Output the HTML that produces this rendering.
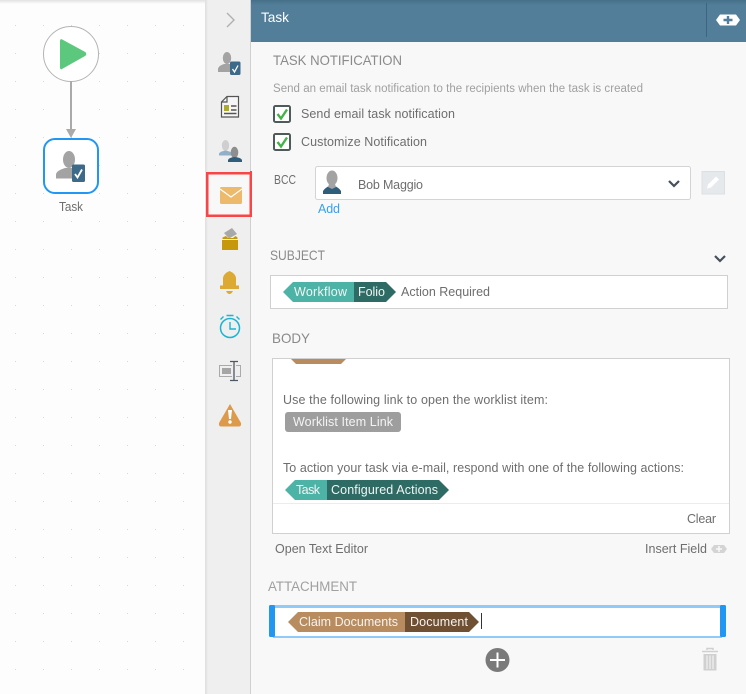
<!DOCTYPE html>
<html><head><meta charset="utf-8"><style>
html,body{margin:0;padding:0;width:746px;height:694px;overflow:hidden;background:#fdfdfd}
svg{display:block}
text{font-family:"Liberation Sans",sans-serif;font-size:12.5px;fill:#6e6e6e}
.h{font-size:14px;fill:#8a8a8a}
.w{fill:#f4f4f4;font-size:12.5px}
</style></head><body>
<svg width="746" height="694" viewBox="0 0 746 694" xmlns="http://www.w3.org/2000/svg">
<defs>
<pattern id="dots" x="15" y="25" width="28" height="28" patternUnits="userSpaceOnUse"><rect width="1" height="1" fill="#d8d8d8"/></pattern>
<linearGradient id="hd" x1="0" y1="0" x2="0" y2="1"><stop offset="0" stop-color="#46708a"/><stop offset=".12" stop-color="#527e99"/><stop offset="1" stop-color="#527e99"/></linearGradient>
<linearGradient id="tp" x1="0" y1="0" x2="0" y2="1"><stop offset="0" stop-color="#e2e2e2"/><stop offset="1" stop-color="#fdfdfd"/></linearGradient>
<linearGradient id="sh" x1="0" y1="0" x2="1" y2="0"><stop offset="0" stop-color="#dedede"/><stop offset="1" stop-color="#efefef"/></linearGradient>
</defs>

<!-- canvas -->
<rect width="206" height="694" fill="#fdfdfd"/>
<rect width="206" height="694" fill="url(#dots)"/>
<rect width="206" height="4" fill="url(#tp)"/>
<circle cx="71" cy="54" r="27.5" fill="#fff" stroke="#b4b4b4" stroke-width="1"/>
<path d="M62 40 L85 52.500 Q86.500 54 85 55.500 L62 68.500 Q60.500 69.500 60.500 67.500 V41 Q60.500 39 62 40Z" fill="#5cc87e" stroke="#5cc87e" stroke-linejoin="round"/>
<rect x="70" y="81" width="2" height="49" fill="#aaa"/>
<path d="M66 129H76L71 138Z" fill="#aaa"/>
<rect x="44" y="139" width="54" height="54" rx="11" fill="#fff" stroke="#2196f3" stroke-width="2"/>
<ellipse cx="69" cy="159.500" rx="6" ry="8.500" fill="#a3a3a3"/>
<path d="M56 178.500 V174 Q57 170.500 65 168 H73 V178.500Z" fill="#a3a3a3"/>
<rect x="72" y="164.500" width="13" height="17.500" rx="1.500" fill="#3e6a8a"/>
<path d="M75 174 L77.500 177.500 L82 169.500" fill="none" stroke="#fff" stroke-width="1.800"/>
<text x="59" y="211" textLength="24" lengthAdjust="spacingAndGlyphs">Task</text>

<!-- side strip -->
<rect x="206" width="45" height="694" fill="#efefef"/>
<rect x="205" width="3" height="694" fill="url(#sh)"/>
<rect x="250" width="1" height="694" fill="#cfcfcf"/>
<path d="M227 13 L234 20 L227 27" fill="none" stroke="#b0b0b0" stroke-width="1.400"/>
<!-- task user -->
<ellipse cx="227" cy="58" rx="4.200" ry="6" fill="#a3a3a3"/>
<path d="M218 72 V68.500 Q219 65.500 224 64 H231 V72Z" fill="#a3a3a3"/>
<rect x="230" y="61.500" width="10.500" height="13.500" rx="1.500" fill="#3e6a8a"/>
<path d="M232.500 69 L234.500 72 L238 65.500" fill="none" stroke="#fff" stroke-width="1.300"/>
<!-- doc -->
<path d="M227 96.500 H238.500 V117 H221.500 V102Z M227 96.500 V102 H221.500" fill="#f6f6f6" stroke="#555" stroke-width="1.200"/>
<rect x="224" y="105" width="5" height="6" fill="#aeaa2a"/>
<path d="M231 106H236.500M231 110H236.500M224 113.500H236.500" stroke="#555" stroke-width="1.400"/>
<!-- two people -->
<ellipse cx="225.500" cy="145.500" rx="3.700" ry="5.500" fill="#cfcfcf"/>
<path d="M219 155.500 V153.500 Q220 151.500 225.500 150.500 Q231 151.500 232 153.500 V155.500Z" fill="#8fb0c6"/>
<ellipse cx="234.500" cy="152.500" rx="3.800" ry="5.700" fill="#8e8e8e"/>
<path d="M228 162 V160 Q229 157.500 234.500 157 Q241 157.500 242 160 V162Z" fill="#2f5d7c"/>
<!-- highlighted -->
<rect x="207.250" y="173.250" width="43.500" height="42.500" fill="#f8f8f8" stroke="#f94545" stroke-width="2.500"/>
<rect x="220" y="187" width="22" height="17" rx="1.500" fill="#edb96a"/>
<path d="M220 189 L231 197 L242 189" fill="none" stroke="#fff" stroke-width="1.200"/>
<!-- box -->
<path d="M224 233 L232 228 L237 234 L229 238.500Z" fill="#a8a8a8"/>
<path d="M222.500 239 V237.500 L226 236 L228 238 H233 L235.500 236 L237.500 237.500 V239Z" fill="#c6980b"/>
<rect x="222" y="240" width="16" height="10" fill="#c6980b"/>
<!-- bell -->
<path d="M223 285.500 V278 Q223.500 273.500 229.500 271 Q235.500 273.500 236 278 V285.500Z" fill="#dcaa33"/>
<rect x="220" y="285.500" width="19" height="3.500" fill="#dcaa33"/>
<path d="M226 291 H233 Q231.500 294 229.500 294 Q227.500 294 226 291Z" fill="#dcaa33"/>
<!-- stopwatch -->
<circle cx="230" cy="328" r="9.500" fill="none" stroke="#1ab5d0" stroke-width="1.500"/>
<path d="M226.500 315.500H233.500M220.500 319.500L223.500 316.500M239.500 319.500L236.500 316.500M230 322V329H236" fill="none" stroke="#1ab5d0" stroke-width="1.400"/>
<!-- text field -->
<path d="M232 365.500H219.500V376.500H232M236 365.500H240.500V376.500H236" fill="none" stroke="#aaa"/>
<rect x="222" y="368" width="9" height="6" fill="#a5a5a5"/>
<path d="M234 361.500V380.500M230 361.500H238M230 380.500H238" stroke="#4d5a63" stroke-width="1.300"/>
<!-- warning -->
<path d="M230 404 L241 423 Q241.500 426.500 239 426.500 H221 Q218.500 426.500 219 423Z" fill="#dd9a4a"/>
<path d="M228 410 H232 L231 419 H229Z" fill="#fff"/>
<circle cx="230" cy="422" r="1.700" fill="#fff"/>

<!-- panel -->
<rect x="251" width="495" height="694" fill="#f8f8f8"/>
<rect x="250" y="171" width="2" height="46" fill="#f94545"/>
<rect x="251" width="495" height="42" fill="url(#hd)"/>
<rect x="706" y="3" width="1" height="34" fill="#3c6680"/>
<text x="261" y="22" textLength="28" lengthAdjust="spacingAndGlyphs" style="fill:#fff;font-size:14px">Task</text>
<path d="M716 20 L720 14.500 H736 L740 20 L736 25.500 H720Z" fill="#fff"/>
<path d="M723.500 20H732.500M728 16V24" stroke="#527e99" stroke-width="2.400"/>

<text class="h" x="273" y="65" textLength="129" lengthAdjust="spacingAndGlyphs">TASK NOTIFICATION</text>
<text x="273" y="92" textLength="370" lengthAdjust="spacing" style="font-size:11.500px;fill:#a0a0a0">Send an email task notification to the recipients when the task is created</text>

<rect x="274" y="106" width="16" height="16" rx="1.500" fill="#fff" stroke="#4f5b5b" stroke-width="2"/>
<path d="M277.500 114 L281 118.500 L287 109.500" fill="none" stroke="#46b04a" stroke-width="2.400"/>
<text x="301" y="118" textLength="154" lengthAdjust="spacing">Send email task notification</text>
<rect x="274" y="134" width="16" height="16" rx="1.500" fill="#fff" stroke="#4f5b5b" stroke-width="2"/>
<path d="M277.500 142 L281 146.500 L287 137.500" fill="none" stroke="#46b04a" stroke-width="2.400"/>
<text x="301" y="146" textLength="126" lengthAdjust="spacing">Customize Notification</text>

<text x="274" y="184" textLength="22" lengthAdjust="spacingAndGlyphs" style="font-size:12.500px">BCC</text>
<rect x="315.500" y="166.500" width="375" height="33" rx="2" fill="#fff" stroke="#d4d4d4"/>
<ellipse cx="332" cy="178" rx="5.500" ry="7.500" fill="#a3a3a3"/>
<path d="M323 194 V191 Q325 188 329 186 H335 Q339 188 341 191 V194Z" fill="#2f5d7c"/>
<path d="M329 184 H335 L336 187 L332 189 L328 187Z" fill="#a3a3a3"/>
<text x="358" y="189" textLength="65" lengthAdjust="spacing">Bob Maggio</text>
<path d="M669 181 L674 186 L679 181" fill="none" stroke="#46505c" stroke-width="2.200"/>
<rect x="702" y="171.500" width="22.500" height="22.500" fill="#e6e9eb" stroke="#dde0e2"/>
<path d="M707 188.500 L708 184.500 L716 176.500 L719 179.500 L711 187.500Z" fill="#fff"/>
<text x="318" y="213" textLength="22" lengthAdjust="spacing" style="fill:#3a9ff0">Add</text>

<text class="h" x="270" y="260" textLength="55" lengthAdjust="spacingAndGlyphs" style="font-size:14px">SUBJECT</text>
<path d="M715 256 L720 261 L725 256" fill="none" stroke="#46505c" stroke-width="2.200"/>
<rect x="270.500" y="275.500" width="457" height="33" fill="#fff" stroke="#d0d0d0"/>
<path d="M283 292 L293 282 H354 V302 H293Z" fill="#4db3a6"/>
<path d="M354 282 H386 L396 292 L386 302 H354Z" fill="#2e6b64"/>
<text class="w" x="294" y="296" textLength="53" lengthAdjust="spacing">Workflow</text>
<text class="w" x="358" y="296" textLength="27" lengthAdjust="spacing">Folio</text>
<text x="401" y="296" textLength="89" lengthAdjust="spacing">Action Required</text>

<text class="h" x="272" y="343" textLength="38" lengthAdjust="spacingAndGlyphs" style="font-size:14px">BODY</text>
<rect x="272.500" y="358.500" width="457" height="175" fill="#fff" stroke="#d0d0d0"/>
<path d="M291 359 H346 L341 364 H296Z" fill="#b88c5e"/>
<text x="283" y="404" textLength="265" lengthAdjust="spacing">Use the following link to open the worklist item:</text>
<rect x="285" y="412" width="116" height="20" rx="3" fill="#9e9e9e"/>
<text class="w" x="293" y="426" textLength="100" lengthAdjust="spacing">Worklist Item Link</text>
<text x="283" y="472" textLength="401" lengthAdjust="spacing">To action your task via e-mail, respond with one of the following actions:</text>
<path d="M285 490 L295 480 H327 V500 H295Z" fill="#4db3a6"/>
<path d="M327 480 H439 L449 490 L439 500 H327Z" fill="#2e6b64"/>
<text class="w" x="296" y="494" textLength="24" lengthAdjust="spacing">Task</text>
<text class="w" x="331" y="494" textLength="107" lengthAdjust="spacing">Configured Actions</text>
<rect x="273" y="503" width="456" height="1" fill="#ececec"/>
<text x="687" y="523" textLength="29" lengthAdjust="spacing">Clear</text>

<text x="275" y="553" textLength="93" lengthAdjust="spacing">Open Text Editor</text>
<text x="645" y="553" textLength="62" lengthAdjust="spacing">Insert Field</text>
<path d="M711 549 L714 545 H724 L727 549 L724 553 H714Z" fill="#d4d4d4"/>
<path d="M716 549H722M719 546V552" stroke="#f8f8f8" stroke-width="1.500"/>

<text class="h" x="268" y="591" textLength="89" lengthAdjust="spacingAndGlyphs" style="font-size:13.500px;fill:#a0a0a0">ATTACHMENT</text>
<rect x="273" y="605" width="449" height="33" fill="#90caf9"/>
<rect x="269" y="605" width="6" height="32" rx="1.500" fill="#2196f3"/>
<rect x="720" y="605" width="6" height="32" rx="1.500" fill="#2196f3"/>
<rect x="275" y="608" width="445" height="28" fill="#fff"/>
<path d="M288 622 L298 612 H405 V632 H298Z" fill="#b88c5e"/>
<path d="M405 612 H469 L479 622 L469 632 H405Z" fill="#6f5033"/>
<text class="w" x="299" y="626" textLength="99" lengthAdjust="spacing">Claim Documents</text>
<text class="w" x="410" y="626" textLength="58" lengthAdjust="spacing">Document</text>
<rect x="481" y="613" width="1" height="16" fill="#333"/>

<circle cx="497.500" cy="660" r="12" fill="#7a7a7a"/>
<path d="M490 660H505M497.500 652.500V667.500" stroke="#fff" stroke-width="2"/>
<path d="M702 651.500H718M707 650V648.500H713V650" fill="none" stroke="#d0d0d0" stroke-width="1.500"/>
<path d="M703.500 654 H716.500 V670.500 H703.500Z" fill="#d0d0d0"/>
<path d="M707 655.500V669M710 655.500V669M713 655.500V669" stroke="#f8f8f8"/>
</svg>
</body></html>
